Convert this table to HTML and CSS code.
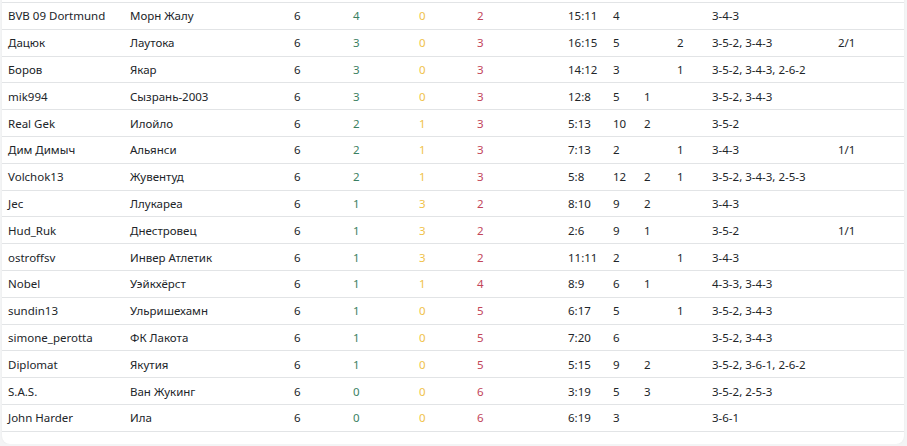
FILE: index.html
```html
<!DOCTYPE html>
<html lang="ru">
<head>
<meta charset="utf-8">
<link rel="stylesheet" href="styles.css">
</head>
<body>
<div class="card">
<table class="standings">
<colgroup>
<col class="c-name"><col class="c-team"><col class="c-g"><col class="c-w"><col class="c-d"><col class="c-l"><col class="c-goals"><col class="c-a"><col class="c-b"><col class="c-c"><col class="c-form"><col class="c-x">
</colgroup>
<tbody>
<tr><td>BVB 09 Dortmund</td><td>Морн Жалу</td><td>6</td><td class="w">4</td><td class="d">0</td><td class="l">2</td><td>15:11</td><td>4</td><td></td><td></td><td>3-4-3</td><td></td></tr>
<tr><td>Дацюк</td><td>Лаутока</td><td>6</td><td class="w">3</td><td class="d">0</td><td class="l">3</td><td>16:15</td><td>5</td><td></td><td>2</td><td>3-5-2, 3-4-3</td><td>2/1</td></tr>
<tr><td>Боров</td><td>Якар</td><td>6</td><td class="w">3</td><td class="d">0</td><td class="l">3</td><td>14:12</td><td>3</td><td></td><td>1</td><td>3-5-2, 3-4-3, 2-6-2</td><td></td></tr>
<tr><td>mik994</td><td>Сызрань-2003</td><td>6</td><td class="w">3</td><td class="d">0</td><td class="l">3</td><td>12:8</td><td>5</td><td>1</td><td></td><td>3-5-2, 3-4-3</td><td></td></tr>
<tr><td>Real Gek</td><td>Илойло</td><td>6</td><td class="w">2</td><td class="d">1</td><td class="l">3</td><td>5:13</td><td>10</td><td>2</td><td></td><td>3-5-2</td><td></td></tr>
<tr><td>Дим Димыч</td><td>Альянси</td><td>6</td><td class="w">2</td><td class="d">1</td><td class="l">3</td><td>7:13</td><td>2</td><td></td><td>1</td><td>3-4-3</td><td>1/1</td></tr>
<tr><td>Volchok13</td><td>Жувентуд</td><td>6</td><td class="w">2</td><td class="d">1</td><td class="l">3</td><td>5:8</td><td>12</td><td>2</td><td>1</td><td>3-5-2, 3-4-3, 2-5-3</td><td></td></tr>
<tr><td>Jec</td><td>Ллукареа</td><td>6</td><td class="w">1</td><td class="d">3</td><td class="l">2</td><td>8:10</td><td>9</td><td>2</td><td></td><td>3-4-3</td><td></td></tr>
<tr><td>Hud_Ruk</td><td>Днестровец</td><td>6</td><td class="w">1</td><td class="d">3</td><td class="l">2</td><td>2:6</td><td>9</td><td>1</td><td></td><td>3-5-2</td><td>1/1</td></tr>
<tr><td>ostroffsv</td><td>Инвер Атлетик</td><td>6</td><td class="w">1</td><td class="d">3</td><td class="l">2</td><td>11:11</td><td>2</td><td></td><td>1</td><td>3-4-3</td><td></td></tr>
<tr><td>Nobel</td><td>Уэйкхёрст</td><td>6</td><td class="w">1</td><td class="d">1</td><td class="l">4</td><td>8:9</td><td>6</td><td>1</td><td></td><td>4-3-3, 3-4-3</td><td></td></tr>
<tr><td>sundin13</td><td>Ульришехамн</td><td>6</td><td class="w">1</td><td class="d">0</td><td class="l">5</td><td>6:17</td><td>5</td><td></td><td>1</td><td>3-5-2, 3-4-3</td><td></td></tr>
<tr><td>simone_perotta</td><td>ФК Лакота</td><td>6</td><td class="w">1</td><td class="d">0</td><td class="l">5</td><td>7:20</td><td>6</td><td></td><td></td><td>3-5-2, 3-4-3</td><td></td></tr>
<tr><td>Diplomat</td><td>Якутия</td><td>6</td><td class="w">1</td><td class="d">0</td><td class="l">5</td><td>5:15</td><td>9</td><td>2</td><td></td><td>3-5-2, 3-6-1, 2-6-2</td><td></td></tr>
<tr><td>S.A.S.</td><td>Ван Жукинг</td><td>6</td><td class="w">0</td><td class="d">0</td><td class="l">6</td><td>3:19</td><td>5</td><td>3</td><td></td><td>3-5-2, 2-5-3</td><td></td></tr>
<tr><td>John Harder</td><td>Ила</td><td>6</td><td class="w">0</td><td class="d">0</td><td class="l">6</td><td>6:19</td><td>3</td><td></td><td></td><td>3-6-1</td><td></td></tr>
</tbody>
</table>
</div>
</body>
</html>
```
FILE: styles.css
```css
html, body {
  margin: 0;
  padding: 0;
  background: #f3f4f5;
}
body {
  font-family: "Noto Sans", "Open Sans", sans-serif;
  font-size: 11.5px;
  color: #212529;
}
.card {
  width: 902px;
  margin: -20px 0 0 2px;
  padding: 22px 0 12px;
  background: #ffffff;
  border-radius: 8px;
  box-shadow: 0 0 2px rgba(0,0,0,0.06);
}
.standings {
  width: 902px;
  table-layout: fixed;
  border-collapse: collapse;
}
.standings td {
  height: 26.8px;
  padding: 0 0 0 6px;
  text-align: left;
  border-bottom: 1px solid #e2e4e6;
  white-space: nowrap;
  box-sizing: border-box;
}
.standings tr:first-child td {
  border-top: 1px solid #e2e4e6;
}
.c-name { width: 122px; }
.c-team { width: 164px; }
.c-g { width: 59px; }
.c-w { width: 66px; }
.c-d { width: 58px; }
.c-l { width: 91px; }
.c-goals { width: 45px; }
.c-a { width: 31px; }
.c-b { width: 33px; }
.c-c { width: 35px; }
.c-form { width: 126px; }
.c-x { width: 72px; }
.w { color: #3b7f62; }
.d { color: #f0c24a; }
.l { color: #c2455a; }
```
